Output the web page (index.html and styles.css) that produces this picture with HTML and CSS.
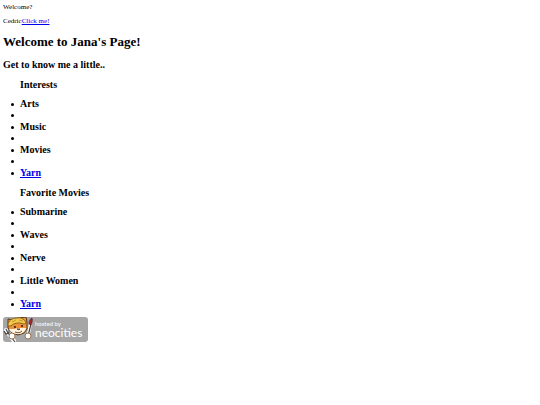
FILE: index.html
```html
<!DOCTYPE html>
<html lang="en">
<head>
    <meta charset="UTF-8">
    <meta name="viewport" content="width=device-width, initial-scale=1.0">
    <title>Jana's Page</title>
    <link rel="stylesheet" href="styles.css">
</head>
<body>
    <p>Welcome?</p>
    <p>Cedric<a href="#">Click me!</a></p>

    <h1>Welcome to Jana's Page!</h1>
    <h2>Get to know me a little..</h2>

    <h3>Interests</h3>
    <ul>
        <li>Arts</li>
        <li class="empty"></li>
        <li>Music</li>
        <li class="empty"></li>
        <li>Movies</li>
        <li class="empty"></li>
        <li><a href="#">Yarn</a></li>
    </ul>

    <h3>Favorite Movies</h3>
    <ul>
        <li>Submarine</li>
        <li class="empty"></li>
        <li>Waves</li>
        <li class="empty"></li>
        <li>Nerve</li>
        <li class="empty"></li>
        <li>Little Women</li>
        <li class="empty"></li>
        <li><a href="#">Yarn</a></li>
    </ul>

    <a class="badge" href="#">
        <svg width="85" height="26" viewBox="0 0 85 26">
            <rect x="0" y="0" width="85" height="25" rx="3" fill="#a6a6a6"/>
            <!-- fork -->
            <path d="M3 13l8 11" stroke="#fff" stroke-width="4" stroke-linecap="round"/>
            <path d="M5 16l7 9M1 14l2 3 3-1 0-4M3 12l2 4" stroke="#444" stroke-width="1.2" fill="none"/>
            <!-- brush -->
            <path d="M28 4l-3 15" stroke="#fff" stroke-width="3" stroke-linecap="round"/>
            <path d="M28 7l-3 12" stroke="#4a4038" stroke-width="1.2"/>
            <path d="M26 7c0-3 1-5 3-6 1 3 0 5-1 7z" fill="#a3262c" stroke="#4c1c1c" stroke-width=".6"/>
            <!-- cat -->
            <path d="M5 2l5 1 5-2 8-1 1 5 0 7-3 4-6 2-6-2-4-5z" fill="#ee9138" stroke="#5b3a1c" stroke-width="1"/>
            <path d="M6 12l5 0 4-1 4 0 4 0c-1 4-4 6-8 6s-8-2-9-5z" fill="#fff3e2"/>
            <path d="M5 8c0-4 4-7 9-7 5-1 8 2 9 5-2 2-4 0-7 0-4 0-6 1-8 3-2 0-3 0-3-1z" fill="#f2c94b" stroke="#8b6420" stroke-width="1"/>
            <path d="M9 5l4-2M16 3l4 1" stroke="#c99a2d" stroke-width="1"/>
            <circle cx="12" cy="10" r="1.1" fill="#3a2415"/>
            <circle cx="19" cy="9" r="1.1" fill="#3a2415"/>
            <path d="M14 12h3l-1 1zM12 15c3 1 5 1 7-1" fill="none" stroke="#5b3a1c" stroke-width=".9"/>
            <circle cx="9" cy="19" r="3" fill="#fff" stroke="#8a5a34" stroke-width=".8"/>
            <circle cx="25" cy="19" r="3" fill="#fff" stroke="#8a5a34" stroke-width=".8"/>
            <text class="badge-small" x="32" y="9">hosted by</text>
            <text class="badge-name" x="32" y="20">neocities</text>
        </svg>
    </a>
</body>
</html>
```
FILE: styles.css
```css
body {
    margin: 3px;
    font-family: "Liberation Serif", "Times New Roman", serif;
    font-size: 7px;
    line-height: 8px;
    color: #000;
    background-color: #fff;
}
a {
    color: #0000ee;
}
p {
    margin: 0 0 6px;
}
h1 {
    margin: 9px 0;
    font-size: 13px;
    line-height: 15px;
}
h2, h3, ul {
    font-size: 10px;
    font-weight: bold;
    line-height: 12px;
}
h2 {
    margin: 10px 0 8px;
}
h3 {
    margin: 8px 0 7px;
    padding-left: 17px;
}
ul {
    margin: 7px 0;
    padding-left: 8px;
    list-style: none;
}
li {
    display: flex;
    align-items: center;
    gap: 6px;
}
li::before {
    content: "";
    width: 3px;
    height: 3px;
    border-radius: 50%;
    background-color: #000;
}
.empty {
    height: 11px;
}
.badge {
    display: inline-block;
}
.badge svg {
    display: block;
}
.badge-small {
    font-family: Lato, sans-serif;
    font-size: 6px;
    fill: #fff;
}
.badge-name {
    font-family: Lato, sans-serif;
    font-size: 12px;
    fill: #fff;
}
```
